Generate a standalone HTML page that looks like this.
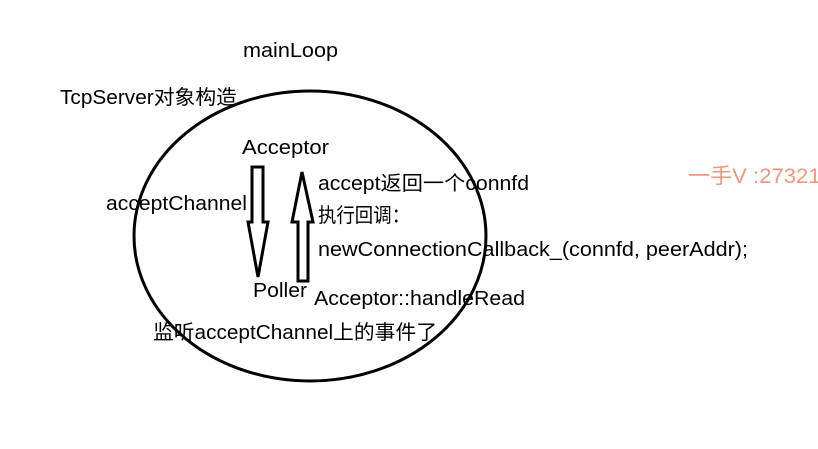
<!DOCTYPE html>
<html><head><meta charset="utf-8"><style>
html,body{margin:0;padding:0;background:#fff;width:818px;height:449px;overflow:hidden}
svg{display:block}
text{font-family:"Liberation Sans","Noto Sans CJK SC",sans-serif;font-size:20px;fill:#000}
</style></head><body>
<svg width="818" height="449" viewBox="0 0 818 449">
<ellipse cx="310" cy="236" rx="176" ry="145" fill="none" stroke="#000" stroke-width="3"/>
<polygon points="252,167 263,167 263,222 268,222 258,277 248,222 252,222" fill="#fff" stroke="#000" stroke-width="3" stroke-linejoin="miter"/>
<polygon points="298,281 308,281 308,222 313,222 302,172 292,222 298,222" fill="#fff" stroke="#000" stroke-width="3" stroke-linejoin="miter"/>
<text x="243" y="57" textLength="95" lengthAdjust="spacingAndGlyphs">mainLoop</text>
<text x="60" y="104" textLength="177" lengthAdjust="spacingAndGlyphs">TcpServer对象构造</text>
<text x="242" y="154" textLength="87" lengthAdjust="spacingAndGlyphs">Acceptor</text>
<text x="106" y="210" textLength="141" lengthAdjust="spacingAndGlyphs">acceptChannel</text>
<text x="318" y="190" textLength="211" lengthAdjust="spacingAndGlyphs">accept返回一个connfd</text>
<text x="318" y="222" textLength="92" lengthAdjust="spacingAndGlyphs">执行回调：</text>
<text x="318" y="256" textLength="430" lengthAdjust="spacingAndGlyphs">newConnectionCallback_(connfd, peerAddr);</text>
<text x="253" y="297" textLength="54" lengthAdjust="spacingAndGlyphs">Poller</text>
<text x="314" y="305" textLength="211" lengthAdjust="spacingAndGlyphs">Acceptor::handleRead</text>
<text x="153" y="339" textLength="284" lengthAdjust="spacingAndGlyphs">监听acceptChannel上的事件了</text>
<text x="688" y="183" style="fill:#f0967a;font-size:21px" textLength="140" lengthAdjust="spacingAndGlyphs">一手V :27321(</text>
</svg>
</body></html>
